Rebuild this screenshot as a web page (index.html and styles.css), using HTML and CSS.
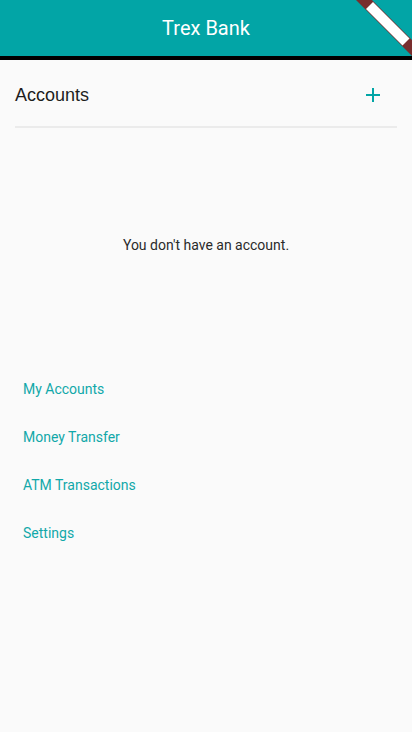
FILE: index.html
```html
<!DOCTYPE html>
<html>
<head>
<meta charset="utf-8">
<link rel="stylesheet" href="styles.css">
</head>
<body>
<header class="appbar">
  <h1 class="title">Trex Bank</h1>
  <svg class="banner" width="60" height="56" viewBox="0 0 60 56">
    <polygon points="4,0 20,0 60,40 60,56" fill="#782e2e"/>
    <polygon points="14,9 21,2 57.5,38.5 50.5,45.5" fill="#ffffff"/>
  </svg>
</header>
<main class="content">
  <div class="section-head">
    <span class="section-title">Accounts</span>
    <button class="add-btn" aria-label="Add account">
      <svg width="24" height="24" viewBox="0 0 24 24"><path d="M19 13h-6v6h-2v-6H5v-2h6V5h2v6h6v2z" fill="#02a5a6"/></svg>
    </button>
  </div>
  <div class="divider"></div>
  <p class="empty">You don't have an account.</p>
  <nav class="menu">
    <a class="menu-item">My Accounts</a>
    <a class="menu-item">Money Transfer</a>
    <a class="menu-item">ATM Transactions</a>
    <a class="menu-item">Settings</a>
  </nav>
</main>
</body>
</html>
```
FILE: styles.css
```css
html, body {
  margin: 0;
  padding: 0;
  background: #fafafa;
  font-family: Roboto, "Liberation Sans", sans-serif;
}
body {
  width: 412px;
  height: 732px;
  overflow: hidden;
}
.appbar {
  position: relative;
  height: 56px;
  background: #02a5a6;
  border-bottom: 4px solid #000;
  display: flex;
  align-items: center;
  justify-content: center;
  overflow: hidden;
}
.title {
  margin: 0;
  color: #fff;
  font-size: 20px;
  font-weight: 400;
  letter-spacing: 0;
}
.banner {
  position: absolute;
  top: 0;
  right: 0;
}
.content {
  display: flex;
  flex-direction: column;
}
.section-head {
  display: flex;
  align-items: center;
  justify-content: space-between;
  height: 48px;
  margin-top: 11px;
  padding: 0 15px;
}
.section-title {
  font-family: "Liberation Sans", Arial, sans-serif;
  font-size: 18px;
  color: #1d1d1d;
}
.add-btn {
  width: 48px;
  height: 48px;
  border: none;
  background: none;
  padding: 0;
  display: flex;
  align-items: center;
  justify-content: center;
}
.divider {
  height: 2px;
  margin: 7px 15px 0;
  background: #ebebeb;
}
.empty {
  margin: 107px 0 0;
  text-align: center;
  font-size: 14px;
  line-height: 20px;
  color: #2a2a2a;
}
.menu {
  display: flex;
  flex-direction: column;
  margin-top: 110px;
}
.menu-item {
  height: 48px;
  display: flex;
  align-items: center;
  padding-left: 23px;
  font-size: 14px;
  color: #11a8a9;
}
```
